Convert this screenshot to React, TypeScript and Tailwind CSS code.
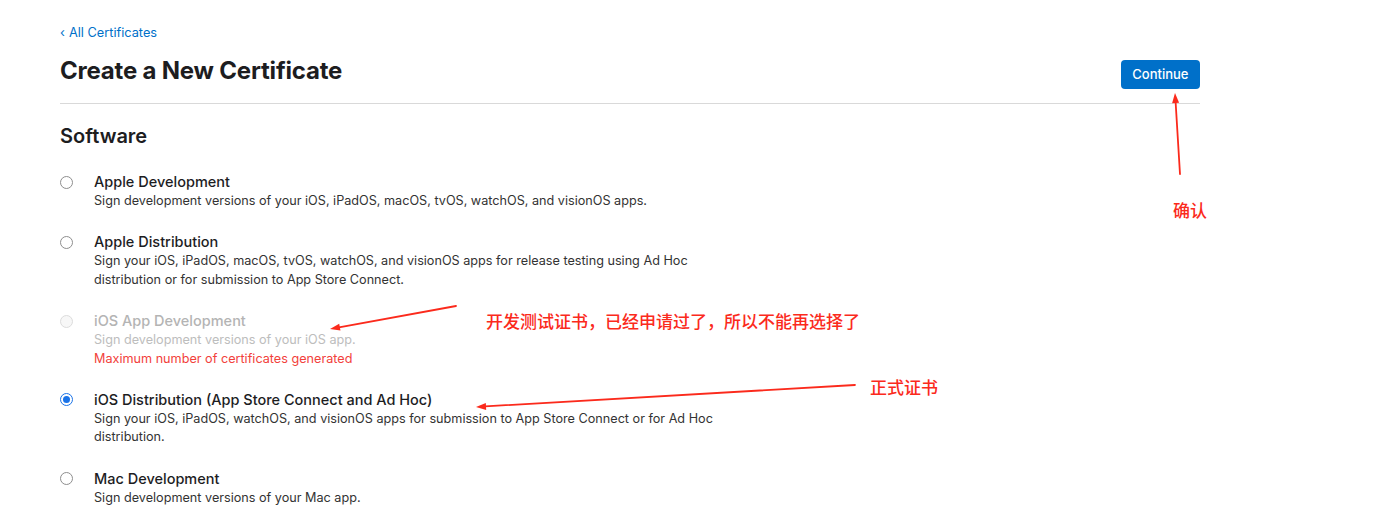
import { ReactNode } from 'react';

type Option = {
  title: string;
  lines: string[];
  selected?: boolean;
  disabled?: boolean;
  error?: string;
};

const options: Option[] = [
  {
    title: 'Apple Development',
    lines: ['Sign development versions of your iOS, iPadOS, macOS, tvOS, watchOS, and visionOS apps.'],
  },
  {
    title: 'Apple Distribution',
    lines: [
      'Sign your iOS, iPadOS, macOS, tvOS, watchOS, and visionOS apps for release testing using Ad Hoc',
      'distribution or for submission to App Store Connect.',
    ],
  },
  {
    title: 'iOS App Development',
    lines: ['Sign development versions of your iOS app.'],
    disabled: true,
    error: 'Maximum number of certificates generated',
  },
  {
    title: 'iOS Distribution (App Store Connect and Ad Hoc)',
    lines: [
      'Sign your iOS, iPadOS, watchOS, and visionOS apps for submission to App Store Connect or for Ad Hoc',
      'distribution.',
    ],
    selected: true,
  },
  {
    title: 'Mac Development',
    lines: ['Sign development versions of your Mac app.'],
  },
];

const Radio = ({ selected, disabled }: { selected?: boolean; disabled?: boolean }) => {
  if (selected) {
    return (
      <span className="mt-[3.5px] flex h-[13px] w-[13px] shrink-0 items-center justify-center rounded-full border border-[#1a73e8] bg-white">
        <span className="h-[7px] w-[7px] rounded-full bg-[#1a73e8]" />
      </span>
    );
  }
  return (
    <span
      className={
        disabled
          ? 'mt-[3.5px] h-[13px] w-[13px] shrink-0 rounded-full border border-[#dcdcdc] bg-[#f7f7f7]'
          : 'mt-[3.5px] h-[13px] w-[13px] shrink-0 rounded-full border border-[#8e8e8e] bg-white'
      }
    />
  );
};

const Note = ({ className, children }: { className: string; children: ReactNode }) => (
  <div
    className={`absolute whitespace-nowrap text-[17px] leading-[20px] font-medium text-[#fb2a1c] ${className}`}
    style={{ fontFamily: '"Noto Sans CJK SC", sans-serif' }}
  >
    {children}
  </div>
);

export default function App() {
  return (
    <div
      className="relative h-[511px] w-[1394px] overflow-hidden bg-white text-[#1d1d1f]"
      style={{ fontFamily: 'Inter, "Noto Sans CJK SC", sans-serif' }}
    >
      <div className="w-[1200px] pl-[60px]">
        {/* Back link */}
        <div className="pt-[25px] text-[12.75px] leading-[16px] text-[#0070c9]">
          <span className="mr-[4px]">‹</span>All Certificates
        </div>

        {/* Header */}
        <div className="mt-[15px] flex h-[48px] items-start justify-between border-b border-[#d9d9d9]">
          <h1 className="text-[24px] leading-[30px] font-bold tracking-[-0.2px]">Create a New Certificate</h1>
          <button className="mt-[4px] h-[29px] rounded-[4px] bg-[#0070c9] px-[11.5px] text-[13px] font-medium text-white">
            Continue
          </button>
        </div>

        {/* Section */}
        <h2 className="mt-[20px] text-[20px] leading-[24px] font-semibold">Software</h2>

        <div className="mt-[24px] flex flex-col gap-[21.75px]">
          {options.map(o => (
            <div key={o.title} className="flex items-start gap-[21px]">
              <Radio selected={o.selected} disabled={o.disabled} />
              <div>
                <div
                  className={`text-[14.5px] leading-[20px] font-medium ${o.disabled ? 'text-[#b4b4b4]' : 'text-[#1d1d1f]'}`}
                >
                  {o.title}
                </div>
                {o.lines.map(l => (
                  <div
                    key={l}
                    className={`text-[12.65px] leading-[18.5px] ${o.disabled ? 'text-[#bdbdbd]' : 'text-[#333333]'}`}
                  >
                    {l}
                  </div>
                ))}
                {o.error && <div className="text-[12.65px] leading-[18.5px] text-[#f2413b]">{o.error}</div>}
              </div>
            </div>
          ))}
        </div>
      </div>

      {/* Annotations */}
      <svg className="pointer-events-none absolute left-0 top-0" width="1394" height="511">
        <g stroke="#fb2a1c" strokeWidth="1.8" fill="none" strokeLinecap="round">
          <line x1="1180" y1="174" x2="1175.6" y2="102" />
          <line x1="456" y1="306" x2="339" y2="327.3" />
          <line x1="855" y1="385" x2="485" y2="406.4" />
        </g>
        <g fill="#fb2a1c">
          <polygon points="1175,93 1179.1,102.8 1172.1,103.2" />
          <polygon points="330,329 340.5,330.6 339.2,323.8" />
          <polygon points="476,407 486.2,409.9 485.8,402.9" />
        </g>
      </svg>
      <Note className="left-[1173px] top-[200px]">确认</Note>
      <Note className="left-[486px] top-[311px]">开发测试证书，已经申请过了，所以不能再选择了</Note>
      <Note className="left-[870px] top-[377px]">正式证书</Note>
    </div>
  );
}
